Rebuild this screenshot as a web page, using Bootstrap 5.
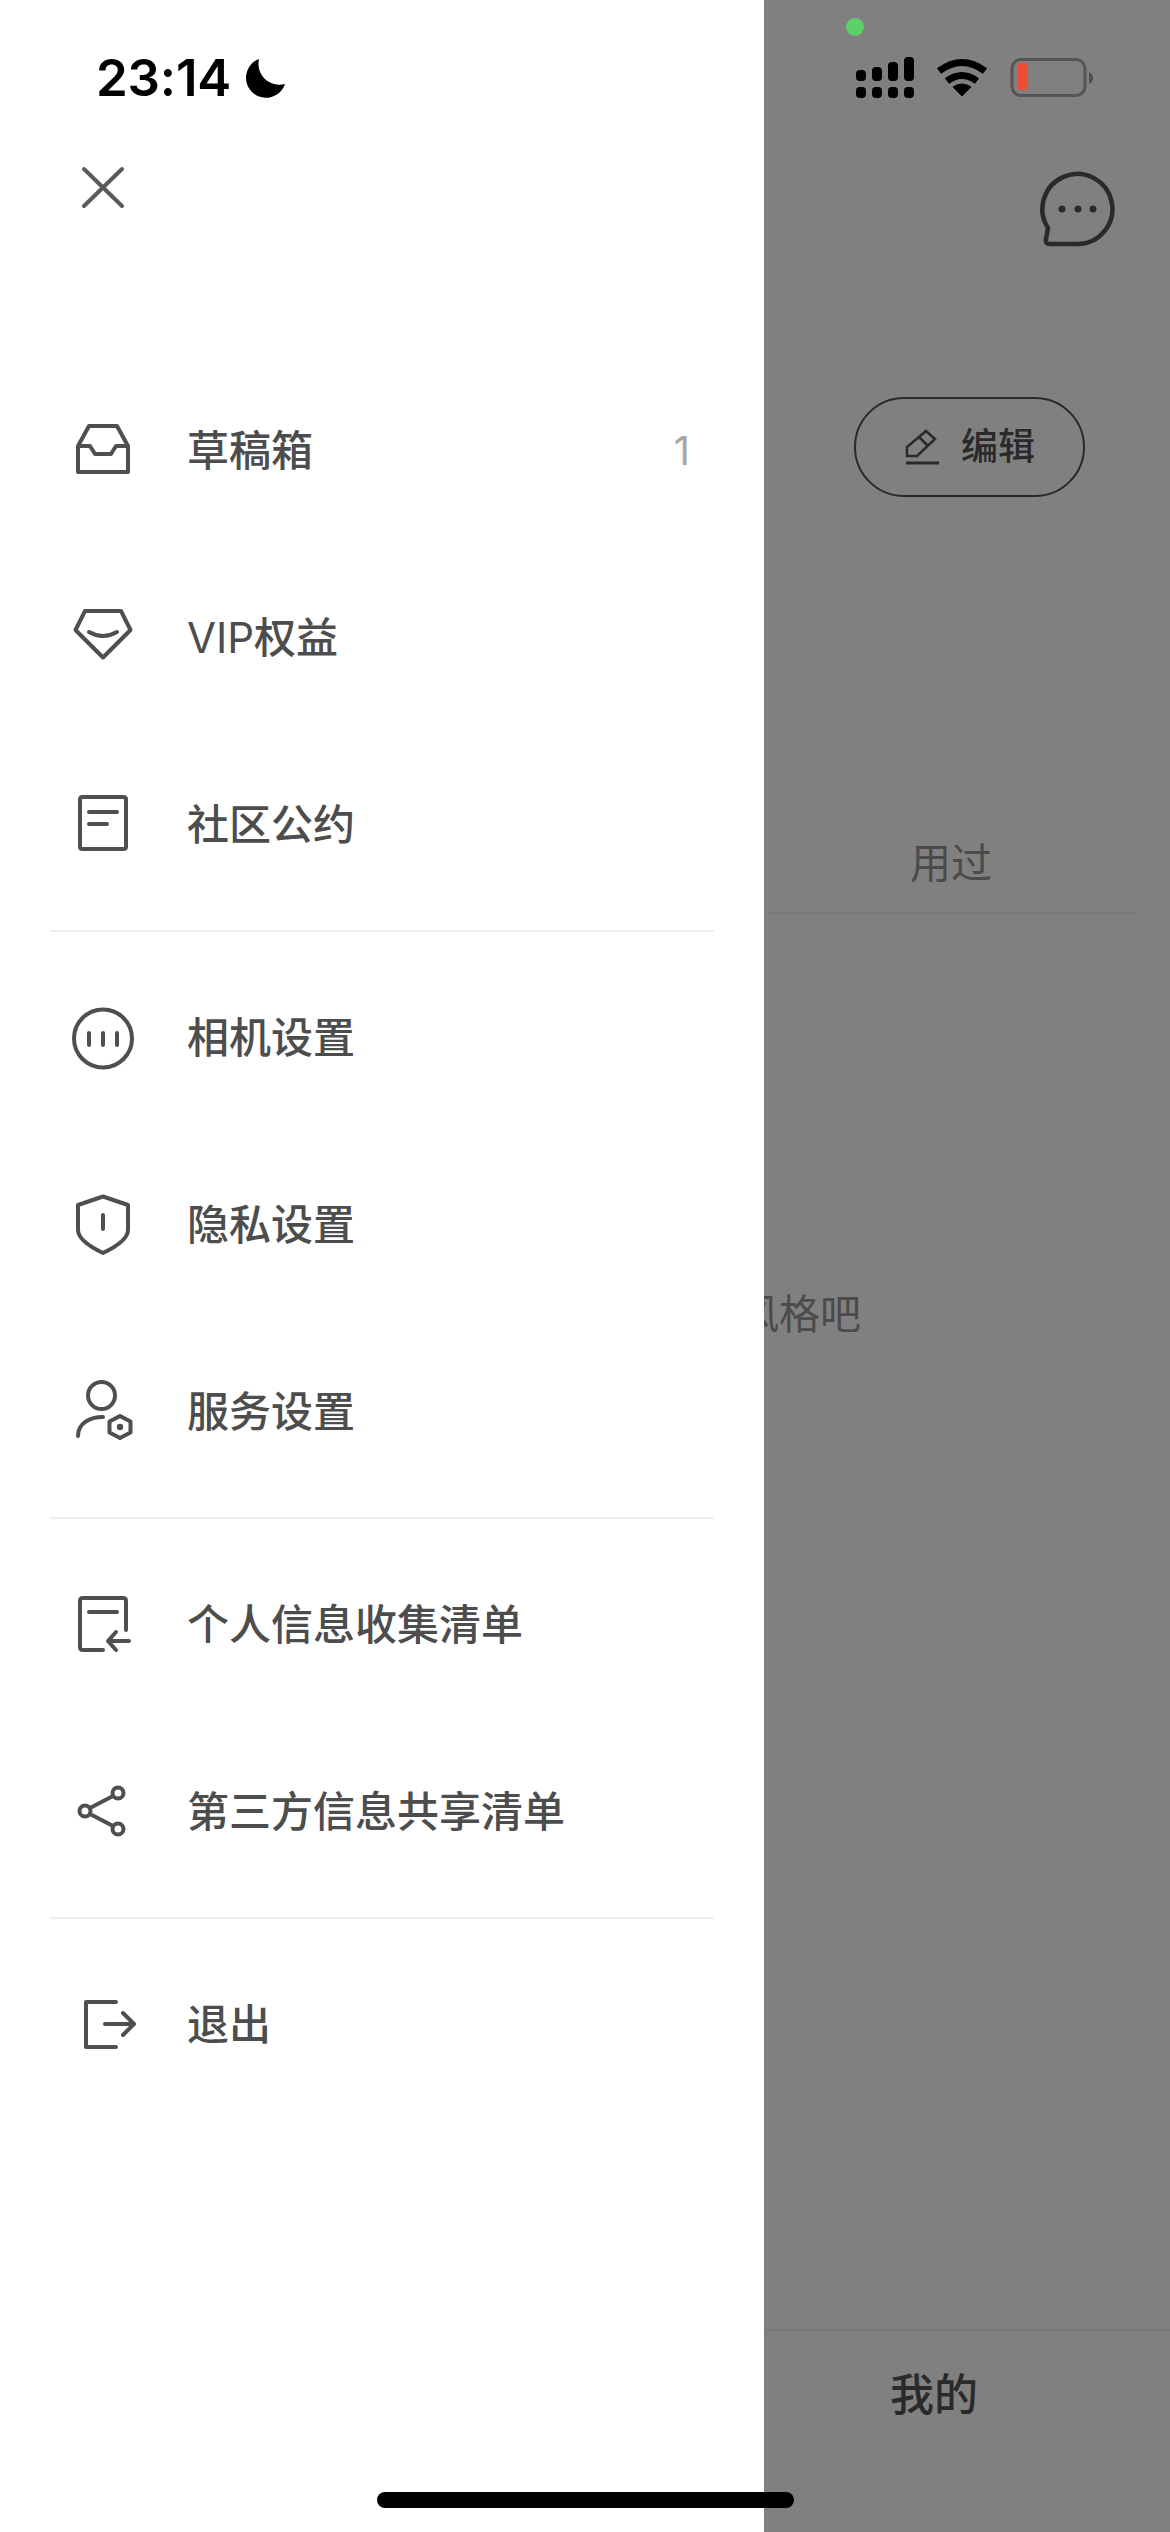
<!doctype html>
<html lang="zh">
<head>
<meta charset="utf-8">
<title>菜单</title>
<link href="https://cdn.jsdelivr.net/npm/bootstrap@5.3.0/dist/css/bootstrap.min.css" rel="stylesheet">
<style>
html,body{height:2532px;margin:0;overflow:hidden}
body{font-family:Inter,"Noto Sans CJK SC",sans-serif;background:#808080}
.shell{height:2532px}
.drawer{width:764px;flex:0 0 764px;background:#fff;color:#4d4d4d}
.clock-row{padding:52px 0 0 96px;height:150px;gap:14px}
.clock-text{font-size:51px;line-height:52px;font-weight:600;color:#000;letter-spacing:-.2px}
.moon-ico{margin-top:5px}
.close-row{height:206px;padding:2px 0 0 68px}
.ico{stroke:#4f4f4f;stroke-width:4;fill:none;stroke-linecap:round;stroke-linejoin:round;flex:0 0 70px;width:70px;height:70px}
.menu-row{height:187px;padding:0 50px 0 68px;gap:49px;font-size:42px;font-weight:500;line-height:60px;color:#4d4d4d;background:transparent;border:0}
.menu-row > span{padding-top:2px}
.latin-part{font-weight:400}
.menu-row .count{color:#a6a6a6;font-size:40px;font-weight:400;font-family:Inter,sans-serif}
.sep{margin:13px 50px 11px;height:2px;border:0;background:#efefef;opacity:1}
.side{min-width:0;overflow:hidden;color:#2a2a2a}
.sys-row{padding:57px 0 0 92px;gap:22px;height:98px}
.chat-ico{margin:73px 54px 0 0;width:76px;height:76px}
.edit-btn{margin:150px 0 0 90px;width:231px;height:100px;border:2.5px solid #2a2a2a;color:#2a2a2a;font-size:37px;font-weight:500;gap:21px;padding:0}
.used{margin:336px 0 0 146px;font-size:41px;line-height:60px;color:#4b4b4b}
.side-line{margin:19px 34px 0 4px;height:2px;background:#7a7a7a}
.hint-wrap{width:97px;margin-top:370px;font-size:41px;line-height:60px;color:#4b4b4b;white-space:nowrap}
.tabbar{margin-top:auto;height:203px;border-top:2px solid #7a7a7a;padding:34px 0 0 126px;font-size:44px;font-weight:500;line-height:60px;color:#2a2a2a}
.dot-green{position:absolute;left:846px;top:18px;width:18px;height:18px;border-radius:50%;background:#5cd16a}
.home-bar{position:absolute;left:377px;top:2492px;width:417px;height:16px;border-radius:8px;background:#000}
</style>
</head>
<body class="position-relative">
<div class="shell d-flex">
  <aside class="drawer d-flex flex-column">
    <div class="clock-row d-flex align-items-start">
      <span class="clock-text">23:14</span>
      <svg class="moon-ico" width="42" height="44" viewBox="244 57 42 44"><path d="M258 59A20 20 0 1 0 284 84A21 21 0 0 1 258 59Z" fill="#000"/></svg>
    </div>
    <div class="close-row">
      <svg class="ico" viewBox="68 152 70 70"><path d="M84 169L122 206M122 169L84 206" stroke="#5a5a5a"/></svg>
    </div>

    <div class="list-group list-group-flush">
      <a class="list-group-item menu-row d-flex align-items-center">
        <svg class="ico" viewBox="68 414 70 70"><path d="M89 425H117L128 445V471H78V445ZM78 445H90L95 453H111L116 445H128"/></svg>
        <span class="flex-grow-1">草稿箱</span><span class="count me-4">1</span>
      </a>
      <a class="list-group-item menu-row d-flex align-items-center">
        <svg class="ico" viewBox="68 601 70 70"><path d="M85 610H121L130.500 629L103 656.500L75.500 629ZM89 631Q103 639 117 631"/></svg>
        <span><span class="latin-part">VIP</span>权益</span>
      </a>
      <a class="list-group-item menu-row d-flex align-items-center">
        <svg class="ico" viewBox="68 788 70 70"><path d="M82.500 796H123.500Q126 796 126 798.500V845.500Q126 848 123.500 848H82.500Q80 848 80 845.500V798.500Q80 796 82.500 796ZM89 811H117M89 823H107"/></svg>
        <span>社区公约</span>
      </a>
    </div>
    <hr class="sep">
    <div class="list-group list-group-flush">
      <a class="list-group-item menu-row d-flex align-items-center">
        <svg class="ico" viewBox="68 1001 70 70"><circle cx="103" cy="1037.500" r="29"/><path d="M89 1032V1044M103 1032V1044M117 1032V1044"/></svg>
        <span>相机设置</span>
      </a>
      <a class="list-group-item menu-row d-flex align-items-center">
        <svg class="ico" viewBox="68 1188 70 70"><path d="M103 1195.500L128 1204V1229Q128 1240 103 1252Q78 1240 78 1229V1204ZM103 1214V1228"/></svg>
        <span>隐私设置</span>
      </a>
      <a class="list-group-item menu-row d-flex align-items-center">
        <svg class="ico" viewBox="68 1375 70 70"><circle cx="101.500" cy="1394.500" r="13.500"/><path d="M103 1416C90 1416 78 1422 78 1435M120 1415L130.500 1420.500V1431.500L120 1437L109.500 1431.500V1420.500Z"/><circle cx="120" cy="1426" r="3.200" fill="#4f4f4f" stroke="none"/></svg>
        <span>服务设置</span>
      </a>
    </div>
    <hr class="sep">
    <div class="list-group list-group-flush">
      <a class="list-group-item menu-row d-flex align-items-center">
        <svg class="ico" viewBox="68 1589 70 70"><path d="M103 1650H83Q80 1650 80 1647V1601Q80 1598 83 1598H123Q126 1598 126 1601V1630M89 1612H117M129 1641H108M116 1632L108 1641L116 1650"/></svg>
        <span>个人信息收集清单</span>
      </a>
      <a class="list-group-item menu-row d-flex align-items-center">
        <svg class="ico" viewBox="68 1776 70 70"><circle cx="85" cy="1811" r="5.500"/><circle cx="118" cy="1793" r="5.500"/><circle cx="118" cy="1829" r="5.500"/><path d="M90 1808L113 1796M90 1814L113 1826"/></svg>
        <span>第三方信息共享清单</span>
      </a>
    </div>
    <hr class="sep">
    <div class="list-group list-group-flush">
      <a class="list-group-item menu-row d-flex align-items-center">
        <svg class="ico" viewBox="68 1991 70 70"><path d="M116 2004H86V2049H116M105 2026H134M123 2015L134 2026L123 2037"/></svg>
        <span>退出</span>
      </a>
    </div>
  </aside>

  <main class="side flex-grow-1 d-flex flex-column">
    <div class="sys-row d-flex align-items-start">
      <svg width="58" height="41" viewBox="856 57 58 41" fill="#000">
        <rect x="856" y="70" width="10" height="11" rx="4"/><rect x="872" y="67" width="10" height="14" rx="4"/><rect x="888" y="62" width="10" height="19" rx="4"/><rect x="904" y="57" width="10" height="24" rx="4"/>
        <rect x="856" y="87" width="10" height="11" rx="4"/><rect x="872" y="87" width="10" height="11" rx="4"/><rect x="888" y="87" width="10" height="11" rx="4"/><rect x="904" y="87" width="10" height="11" rx="4"/>
      </svg>
      <svg width="52" height="41" viewBox="936 57 52 41"><path d="M939 71Q962 54 985 71M947 81Q962 70 977 81" fill="none" stroke="#000" stroke-width="7"/><path d="M962 96L953 87Q962 81 971 87Z" fill="#000" stroke="#000" stroke-width="1" stroke-linejoin="round"/></svg>
      <svg width="84" height="41" viewBox="1008 57 84 41"><rect x="1010" y="59.500" width="73" height="36" rx="9" fill="none" stroke="#555" stroke-width="3"/><rect x="1015" y="63" width="11" height="27" rx="4" fill="#f04a38"/><path d="M1087 72Q1091 74 1091 78Q1091 82 1087 84Z" fill="#4f4f4f"/></svg>
    </div>
    <svg class="chat-ico align-self-end" viewBox="1039 171 76 76" fill="none"><path d="M1047 228A35 35 0 1 1 1077 244H1049Q1044 244 1045 239Z" stroke="#2a2a2a" stroke-width="4.500" stroke-linejoin="round"/><circle cx="1061" cy="209" r="3.500" fill="#2a2a2a"/><circle cx="1077" cy="209" r="3.500" fill="#2a2a2a"/><circle cx="1092" cy="209" r="3.500" fill="#2a2a2a"/></svg>
    <a class="btn rounded-pill edit-btn d-flex align-items-center justify-content-center">
      <svg width="36" height="38" viewBox="906 427 36 38" fill="none" stroke="#2a2a2a" stroke-width="2.500"><path d="M909 455V446L928 430L937 438L919 455ZM921 436L930 445"/><path d="M908 462H941" stroke-width="3"/></svg>
      <span>编辑</span>
    </a>
    <div class="used">用过</div>
    <div class="side-line"></div>
    <div class="hint-wrap d-flex justify-content-end"><span>风格吧</span></div>
    <div class="tabbar">我的</div>
  </main>
</div>
<span class="dot-green"></span>
<div class="home-bar"></div>
<script src="https://cdn.jsdelivr.net/npm/bootstrap@5.3.0/dist/js/bootstrap.bundle.min.js"></script>
</body>
</html>
